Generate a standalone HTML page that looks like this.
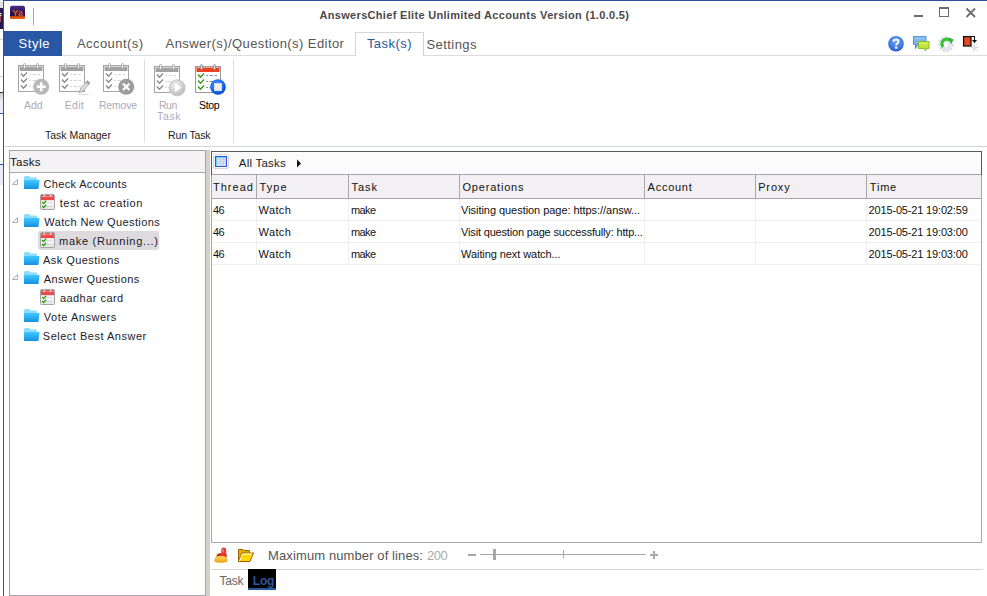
<!DOCTYPE html>
<html><head><meta charset="utf-8">
<style>
*{margin:0;padding:0;box-sizing:border-box}
html,body{width:987px;height:596px;overflow:hidden;background:#fff;font-family:"Liberation Sans",sans-serif;color:#222}
.a{position:absolute;white-space:nowrap}
.ln{position:absolute}
.bl{display:inline-block;width:0;height:0}
</style></head><body>
<svg width="0" height="0" style="position:absolute"><defs>
<linearGradient id="fgrad" x1="0" y1="0" x2="0" y2="1"><stop offset="0" stop-color="#40c8ff"/><stop offset="1" stop-color="#1590e0"/></linearGradient>
</defs></svg>
<div class="ln" style="left:0;top:0;width:3px;height:2px;background:#f0f0f0"></div>
<div class="ln" style="left:0;top:2px;width:3px;height:6px;background:#e0e0e0"></div>
<div class="ln" style="left:0;top:8px;width:3px;height:21px;background:#2a1650"></div>
<div class="a" style="left:-2px;top:12px;font-size:12px;color:#fff;line-height:12px">f</div>
<div class="ln" style="left:0;top:39px;width:3px;height:1px;background:#d0d0d0"></div>
<div class="ln" style="left:0;top:76px;width:3px;height:1px;background:#d0d0d0"></div>
<div class="ln" style="left:0;top:92px;width:3px;height:1px;background:#3a2a6a"></div>
<div class="ln" style="left:0;top:93px;width:3px;height:20px;background:linear-gradient(#c8c8c8,#ececf8 40%)"></div>
<div class="ln" style="left:0;top:113px;width:3px;height:1px;background:#3050c0"></div>
<div class="ln" style="left:0;top:164px;width:3px;height:1px;background:#3050c0"></div>
<div class="ln" style="left:0;top:165px;width:3px;height:20px;background:#ececf8"></div>
<div class="ln" style="left:3px;top:0;width:984px;height:1px;background:#2b4f9a"></div>
<div class="ln" style="left:3px;top:0;width:1px;height:596px;background:#2b57a8"></div>

<svg class="ln" style="left:10px;top:5px" width="15" height="15" viewBox="0 0 15 15">
<defs><linearGradient id="yag" x1="0" y1="0" x2="0" y2="1"><stop offset="0" stop-color="#4a2c80"/><stop offset=".8" stop-color="#1a0a50"/></linearGradient></defs>
<rect x="0" y="0.7" width="15" height="13.3" rx="2" fill="url(#yag)"/>
<path d="M0 11.3H15V12.2Q15 14 13 14H2Q0 14 0 12.2Z" fill="#f05a08"/>
<text x="2.2" y="11" font-family="Liberation Sans" font-size="9" font-weight="bold" fill="#e85a10">Ya</text>
</svg>
<div class="ln" style="left:33px;top:8px;width:1px;height:17px;background:#a8a8a8"></div>
<div class="ln" style="left:914px;top:15px;width:9px;height:2px;background:#6d6d6d"></div>
<div class="ln" style="left:939px;top:7px;width:10px;height:10px;border:1px solid #6d6d6d;border-top-width:2px"></div>
<svg class="ln" style="left:965px;top:7px" width="12" height="11"><path d="M1.5 1.5 L10 10 M10 1.5 L1.5 10" stroke="#6d6d6d" stroke-width="1.8"/></svg>

<div class="a" id="title" style="left:319.50px;top:9.60px;font-size:11px;line-height:11px;color:#4a4a4a;letter-spacing:0.315px;font-weight:bold;">AnswersChief Elite Unlimited Accounts Version (1.0.0.5)<span class="bl"></span></div>
<div class="ln" style="left:4px;top:55px;width:983px;height:1px;background:#dcdcdc"></div>
<div class="ln" style="left:4px;top:31px;width:58px;height:25px;background:#2a56a6"></div>
<div class="ln" style="left:355px;top:32px;width:69px;height:24px;border:1px solid #d5d5d5;border-bottom:none;background:#fff"></div>

<div class="a" id="t_style" style="left:18.50px;top:37.00px;font-size:13px;line-height:13px;color:#fff;letter-spacing:0.550px;">Style<span class="bl"></span></div>
<div class="a" id="t_acc" style="left:76.90px;top:37.00px;font-size:13px;line-height:13px;color:#555;letter-spacing:0.445px;">Account(s)<span class="bl"></span></div>
<div class="a" id="t_ans" style="left:165.60px;top:37.00px;font-size:13px;line-height:13px;color:#555;letter-spacing:0.423px;">Answer(s)/Question(s) Editor<span class="bl"></span></div>
<div class="a" id="t_task" style="left:366.90px;top:36.71px;font-size:13px;line-height:13px;color:#2b579a;letter-spacing:0.466px;">Task(s)<span class="bl"></span></div>
<div class="a" id="t_set" style="left:426.50px;top:38.00px;font-size:13px;line-height:13px;color:#555;letter-spacing:0.428px;">Settings<span class="bl"></span></div>
<div class="ln" style="left:4px;top:146px;width:983px;height:1px;background:#d5d5d5"></div>
<div class="ln" style="left:144px;top:59px;width:1px;height:84px;background:#e0e0e0"></div>
<div class="ln" style="left:233px;top:59px;width:1px;height:84px;background:#e0e0e0"></div>

<svg class="ln" style="left:17px;top:63px" width="34" height="34"><rect x="1.5" y="2.5" width="25" height="26" fill="#fff" stroke="#a4a4a4"/><rect x="2" y="3" width="24" height="5" fill="#a2a2a2"/><path d="M2.5 8V3.5H25.5V8" fill="none" stroke="#dadada" stroke-width="1"/><rect x="6.5" y="0.5" width="2" height="5" rx="1" fill="#eeeeee" stroke="#a0a0a0" stroke-width=".8"/><rect x="19.5" y="0.5" width="2" height="5" rx="1" fill="#eeeeee" stroke="#a0a0a0" stroke-width=".8"/><path d="M4 10.6L6.5 13.2L10 9.6" fill="none" stroke="#8c8c8c" stroke-width="1.5"/><path d="M12.2 11.5H23" stroke="#d4d4d4" stroke-dasharray="1.8 1.5 3.5 1.5 3.5"/><path d="M4 16.6L6.5 19.2L10 15.6" fill="none" stroke="#8c8c8c" stroke-width="1.5"/><path d="M12.2 17.5H23" stroke="#d4d4d4" stroke-dasharray="1.8 1.5 3.5 1.5 3.5"/><path d="M4 22.6L6.5 25.2L10 21.6" fill="none" stroke="#8c8c8c" stroke-width="1.5"/><path d="M12.2 23.5H23" stroke="#d4d4d4" stroke-dasharray="1.8 1.5 3.5 1.5 3.5"/><circle cx="24.2" cy="23.8" r="8" fill="#b8b8b8"/><path d="M24.2 19.3V28.3M19.7 23.8H28.7" stroke="#fff" stroke-width="2.6"/></svg>
<svg class="ln" style="left:58px;top:63px" width="34" height="34"><rect x="1.5" y="2.5" width="25" height="26" fill="#fff" stroke="#a4a4a4"/><rect x="2" y="3" width="24" height="5" fill="#a2a2a2"/><path d="M2.5 8V3.5H25.5V8" fill="none" stroke="#dadada" stroke-width="1"/><rect x="6.5" y="0.5" width="2" height="5" rx="1" fill="#eeeeee" stroke="#a0a0a0" stroke-width=".8"/><rect x="19.5" y="0.5" width="2" height="5" rx="1" fill="#eeeeee" stroke="#a0a0a0" stroke-width=".8"/><path d="M4 10.6L6.5 13.2L10 9.6" fill="none" stroke="#8c8c8c" stroke-width="1.5"/><path d="M12.2 11.5H23" stroke="#d4d4d4" stroke-dasharray="1.8 1.5 3.5 1.5 3.5"/><path d="M4 16.6L6.5 19.2L10 15.6" fill="none" stroke="#8c8c8c" stroke-width="1.5"/><path d="M12.2 17.5H23" stroke="#d4d4d4" stroke-dasharray="1.8 1.5 3.5 1.5 3.5"/><path d="M4 22.6L6.5 25.2L10 21.6" fill="none" stroke="#8c8c8c" stroke-width="1.5"/><path d="M12.2 23.5H23" stroke="#d4d4d4" stroke-dasharray="1.8 1.5 3.5 1.5 3.5"/><path d="M21 30L23 25L29.5 17.5L32 20L25.5 27.5Z" fill="#dcdcdc" stroke="#b0b0b0"/><path d="M28.5 18.5L31 21" stroke="#a0a0a0" stroke-width="2"/><path d="M20 31.5H31" stroke="#e0e0e0"/></svg>
<svg class="ln" style="left:102px;top:63px" width="34" height="34"><rect x="1.5" y="2.5" width="25" height="26" fill="#fff" stroke="#a4a4a4"/><rect x="2" y="3" width="24" height="5" fill="#a2a2a2"/><path d="M2.5 8V3.5H25.5V8" fill="none" stroke="#dadada" stroke-width="1"/><rect x="6.5" y="0.5" width="2" height="5" rx="1" fill="#eeeeee" stroke="#a0a0a0" stroke-width=".8"/><rect x="19.5" y="0.5" width="2" height="5" rx="1" fill="#eeeeee" stroke="#a0a0a0" stroke-width=".8"/><path d="M4 10.6L6.5 13.2L10 9.6" fill="none" stroke="#8c8c8c" stroke-width="1.5"/><path d="M12.2 11.5H23" stroke="#d4d4d4" stroke-dasharray="1.8 1.5 3.5 1.5 3.5"/><path d="M4 16.6L6.5 19.2L10 15.6" fill="none" stroke="#8c8c8c" stroke-width="1.5"/><path d="M12.2 17.5H23" stroke="#d4d4d4" stroke-dasharray="1.8 1.5 3.5 1.5 3.5"/><path d="M4 22.6L6.5 25.2L10 21.6" fill="none" stroke="#8c8c8c" stroke-width="1.5"/><path d="M12.2 23.5H23" stroke="#d4d4d4" stroke-dasharray="1.8 1.5 3.5 1.5 3.5"/><circle cx="24.2" cy="23.8" r="8" fill="#9c9c9c"/><path d="M21 20.6L27.4 27M27.4 20.6L21 27" stroke="#fff" stroke-width="2.2"/></svg>
<svg class="ln" style="left:153px;top:64px" width="34" height="34"><defs><radialGradient id="rg" cx=".4" cy=".35" r=".7"><stop offset="0" stop-color="#f4f4f4"/><stop offset="1" stop-color="#b8b8b8"/></radialGradient></defs><rect x="1.5" y="2.5" width="25" height="26" fill="#fff" stroke="#a4a4a4"/><rect x="2" y="3" width="24" height="5" fill="#a2a2a2"/><path d="M2.5 8V3.5H25.5V8" fill="none" stroke="#dadada" stroke-width="1"/><rect x="6.5" y="0.5" width="2" height="5" rx="1" fill="#eeeeee" stroke="#a0a0a0" stroke-width=".8"/><rect x="19.5" y="0.5" width="2" height="5" rx="1" fill="#eeeeee" stroke="#a0a0a0" stroke-width=".8"/><path d="M4 10.6L6.5 13.2L10 9.6" fill="none" stroke="#8c8c8c" stroke-width="1.5"/><path d="M12.2 11.5H23" stroke="#d4d4d4" stroke-dasharray="1.8 1.5 3.5 1.5 3.5"/><path d="M4 16.6L6.5 19.2L10 15.6" fill="none" stroke="#8c8c8c" stroke-width="1.5"/><path d="M12.2 17.5H23" stroke="#d4d4d4" stroke-dasharray="1.8 1.5 3.5 1.5 3.5"/><path d="M4 22.6L6.5 25.2L10 21.6" fill="none" stroke="#8c8c8c" stroke-width="1.5"/><path d="M12.2 23.5H23" stroke="#d4d4d4" stroke-dasharray="1.8 1.5 3.5 1.5 3.5"/><circle cx="24.2" cy="23.8" r="8" fill="url(#rg)" stroke="#c8c8c8"/><path d="M22 19.5L28.5 23.8L22 28Z" fill="#fff"/></svg>
<svg class="ln" style="left:194px;top:64px" width="34" height="34"><defs><radialGradient id="bg2" cx=".45" cy=".4" r=".65"><stop offset="0" stop-color="#5ab0ff"/><stop offset=".7" stop-color="#1060e8"/><stop offset="1" stop-color="#0a3cb0"/></radialGradient></defs><rect x="1.5" y="2.5" width="25" height="26" fill="#fff" stroke="#9a9a9a"/><rect x="2" y="3" width="24" height="5" fill="#e8431e"/><path d="M2.5 8V3.5H25.5V8" fill="none" stroke="#f8a088" stroke-width="1"/><rect x="6.5" y="0.5" width="2" height="5" rx="1" fill="#d8e0e8" stroke="#8090a0" stroke-width=".8"/><rect x="19.5" y="0.5" width="2" height="5" rx="1" fill="#d8e0e8" stroke="#8090a0" stroke-width=".8"/><path d="M4 10.6L6.5 13.2L10 9.6" fill="none" stroke="#3a9a1e" stroke-width="1.5"/><path d="M12.2 11.5H23" stroke="#8890a0" stroke-dasharray="1.8 1.5 3.5 1.5 3.5"/><path d="M4 16.6L6.5 19.2L10 15.6" fill="none" stroke="#3a9a1e" stroke-width="1.5"/><path d="M12.2 17.5H23" stroke="#8890a0" stroke-dasharray="1.8 1.5 3.5 1.5 3.5"/><path d="M4 22.6L6.5 25.2L10 21.6" fill="none" stroke="#3a9a1e" stroke-width="1.5"/><path d="M12.2 23.5H23" stroke="#8890a0" stroke-dasharray="1.8 1.5 3.5 1.5 3.5"/><circle cx="24" cy="23" r="7.8" fill="url(#bg2)"/><rect x="20.5" y="19.5" width="7" height="7" fill="#f0f0f0" stroke="#d0d8e8"/></svg>
<div class="a" id="r_add" style="left:24.00px;top:100.00px;font-size:10.5px;line-height:10.5px;color:#b0a8b8;letter-spacing:0.000px;">Add<span class="bl"></span></div>
<div class="a" id="r_edit" style="left:64.80px;top:100.00px;font-size:10.5px;line-height:10.5px;color:#b0a8b8;letter-spacing:0.267px;">Edit<span class="bl"></span></div>
<div class="a" id="r_rem" style="left:98.90px;top:100.00px;font-size:10.5px;line-height:10.5px;color:#b0a8b8;letter-spacing:-0.160px;">Remove<span class="bl"></span></div>
<div class="a" id="r_run" style="left:159.00px;top:100.00px;font-size:10.5px;line-height:10.5px;color:#b0a8b8;letter-spacing:-0.500px;">Run<span class="bl"></span></div>
<div class="a" id="r_task" style="left:157.00px;top:111.00px;font-size:10.5px;line-height:10.5px;color:#b0a8b8;letter-spacing:0.667px;">Task<span class="bl"></span></div>
<div class="a" id="r_stop" style="left:199.00px;top:100.00px;font-size:10.5px;line-height:10.5px;color:#000;letter-spacing:-0.334px;">Stop<span class="bl"></span></div>
<div class="a" id="r_tm" style="left:45.00px;top:129.71px;font-size:10.5px;line-height:10.5px;color:#222;letter-spacing:0.000px;">Task Manager<span class="bl"></span></div>
<div class="a" id="r_rt" style="left:168.00px;top:129.71px;font-size:10.5px;line-height:10.5px;color:#222;letter-spacing:-0.143px;">Run Task<span class="bl"></span></div>
<svg class="ln" style="left:887px;top:35px" width="18" height="18" viewBox="0 0 18 18">
<defs><radialGradient id="hg" cx=".5" cy=".35" r=".65"><stop offset="0" stop-color="#6aa8f0"/><stop offset=".8" stop-color="#3a70d8"/><stop offset="1" stop-color="#2050b8"/></radialGradient></defs>
<circle cx="9" cy="8.8" r="7.8" fill="url(#hg)"/>
<path d="M6.5 6.8Q6.5 4.5 9 4.5Q11.5 4.5 11.5 6.6Q11.5 8 10 8.6Q9.2 9 9.2 10.3" fill="none" stroke="#fff" stroke-width="1.9"/>
<rect x="8.1" y="11.5" width="2.2" height="2.2" fill="#fff"/></svg>
<svg class="ln" style="left:913px;top:36px" width="17" height="17" viewBox="0 0 17 17">
<defs><linearGradient id="chb" x1="0" y1="0" x2="0" y2="1"><stop offset="0" stop-color="#90c8f8"/><stop offset="1" stop-color="#5aa0e8"/></linearGradient>
<linearGradient id="chg" x1="0" y1="0" x2="0" y2="1"><stop offset="0" stop-color="#d8f060"/><stop offset="1" stop-color="#a8d818"/></linearGradient></defs>
<path d="M0.5 0.5H13V8.5H5L2.5 12.5V8.5H0.5Z" fill="url(#chb)" stroke="#4a88d0" stroke-width=".9"/>
<path d="M5.5 5.5H16V12.5H13.5L12.5 15L11 12.5H5.5Z" fill="url(#chg)" stroke="#80b820" stroke-width=".9"/></svg>
<svg class="ln" style="left:937px;top:35px" width="18" height="18" viewBox="0 0 18 18">
<circle cx="9" cy="9" r="6.6" fill="none" stroke="#dcdce6" stroke-width="3" stroke-dasharray="2.6 1.1"/>
<circle cx="9" cy="9" r="5.6" fill="#e4e4ee"/>
<path d="M6.2 12A4.6 4.6 0 0 1 13 5.5" fill="none" stroke="#36c436" stroke-width="3.2"/>
<path d="M11 2.8L16.5 4.2L14.2 9.2Z" fill="#30b030"/>
<circle cx="9.2" cy="9.6" r="2.2" fill="#fff"/></svg>
<svg class="ln" style="left:962px;top:35px" width="18" height="18" viewBox="0 0 18 18">
<rect x="1.6" y="1.6" width="7.4" height="9.4" fill="#e8481e" stroke="#111" stroke-width="1.3"/>
<path d="M9 1.5H12.5V5.5" fill="none" stroke="#111" stroke-width="1.1"/>
<path d="M10 5H15L12.5 8.2Z" fill="#111"/>
<path d="M12.5 8.5V16.5M8.5 12.5H16.5M9.7 9.7L15.3 15.3M15.3 9.7L9.7 15.3" stroke="#c0c0c0" stroke-width=".7"/>
<circle cx="12.5" cy="12.5" r="1.2" fill="#e8e8e8"/></svg>

<div class="ln" style="left:9px;top:150px;width:197px;height:446px;border:1px solid #a8a6ac;background:#fff"></div>
<div class="ln" style="left:10px;top:151px;width:195px;height:22px;background:#f5f2f5;border-bottom:1px solid #a8a6ac"></div>

<div class="a" id="tasks_h" style="left:10.00px;top:156.71px;font-size:11.5px;line-height:11.5px;color:#111;letter-spacing:0.250px;">Tasks<span class="bl"></span></div>
<svg class="ln" style="left:12px;top:179px" width="7" height="7"><path d="M5.5 0.5V5.5H0.5Z" fill="none" stroke="#b0b0b0"/></svg>
<svg class="ln" style="left:24px;top:176px" width="16" height="14" viewBox="0 0 16 14">
<path d="M0 1.5Q0 0 1.5 0H5L6.5 1.5H12Q13 1.5 13 2.5V4H0Z" fill="#8cdcff"/>
<path d="M0 4H15.5L14.5 12.5Q14.3 13 13.8 13H0.5Q0 13 0 12.5Z" fill="url(#fgrad)"/>
</svg>
<div class="a" id="tree0" style="left:43.60px;top:179.00px;font-size:11px;line-height:11px;color:#1a1a2a;letter-spacing:0.321px;">Check Accounts<span class="bl"></span></div>
<svg class="ln" style="left:40px;top:194px" width="16" height="17" viewBox="0 0 16 17">
<defs><linearGradient id="scg40194" x1="0" y1="0" x2="0" y2="1"><stop offset=".4" stop-color="#fff"/><stop offset="1" stop-color="#e4e4e4"/></linearGradient></defs>
<rect x="0.5" y="0.5" width="14" height="15" rx="1" fill="url(#scg40194)" stroke="#a4a4a4"/>
<rect x="1" y="1" width="13" height="5.2" fill="#f04848"/>
<path d="M1.5 2.5H13.5" stroke="#ff9090" stroke-width=".8"/>
<rect x="3.5" y="0" width="1.6" height="3" rx=".8" fill="#f4f4f4" stroke="#a0a0a0" stroke-width=".6"/>
<rect x="9.8" y="0" width="1.6" height="3" rx=".8" fill="#f4f4f4" stroke="#a0a0a0" stroke-width=".6"/>
<path d="M2 8L3.6 9.5L6.2 6.8M2 12L3.6 13.5L6.2 10.8" fill="none" stroke="#2a9a10" stroke-width="1.3"/>
<path d="M7 8.5H13M7 12.5H13" stroke="#c8c8d4" stroke-width=".9" stroke-dasharray="2 .8"/>
</svg>
<div class="a" id="tree1" style="left:59.70px;top:198.00px;font-size:11px;line-height:11px;color:#1a1a2a;letter-spacing:0.533px;">test ac creation<span class="bl"></span></div>
<svg class="ln" style="left:12px;top:217px" width="7" height="7"><path d="M5.5 0.5V5.5H0.5Z" fill="none" stroke="#b0b0b0"/></svg>
<svg class="ln" style="left:24px;top:214px" width="16" height="14" viewBox="0 0 16 14">
<path d="M0 1.5Q0 0 1.5 0H5L6.5 1.5H12Q13 1.5 13 2.5V4H0Z" fill="#8cdcff"/>
<path d="M0 4H15.5L14.5 12.5Q14.3 13 13.8 13H0.5Q0 13 0 12.5Z" fill="url(#fgrad)"/>
</svg>
<div class="a" id="tree2" style="left:44.30px;top:217.00px;font-size:11px;line-height:11px;color:#1a1a2a;letter-spacing:0.388px;">Watch New Questions<span class="bl"></span></div>
<div class="ln" style="left:38px;top:230.5px;width:121px;height:19px;background:#dddbdd;border-radius:2px"></div>
<svg class="ln" style="left:40px;top:232px" width="16" height="17" viewBox="0 0 16 17">
<defs><linearGradient id="scg40232" x1="0" y1="0" x2="0" y2="1"><stop offset=".4" stop-color="#fff"/><stop offset="1" stop-color="#e4e4e4"/></linearGradient></defs>
<rect x="0.5" y="0.5" width="14" height="15" rx="1" fill="url(#scg40232)" stroke="#a4a4a4"/>
<rect x="1" y="1" width="13" height="5.2" fill="#f04848"/>
<path d="M1.5 2.5H13.5" stroke="#ff9090" stroke-width=".8"/>
<rect x="3.5" y="0" width="1.6" height="3" rx=".8" fill="#f4f4f4" stroke="#a0a0a0" stroke-width=".6"/>
<rect x="9.8" y="0" width="1.6" height="3" rx=".8" fill="#f4f4f4" stroke="#a0a0a0" stroke-width=".6"/>
<path d="M2 8L3.6 9.5L6.2 6.8M2 12L3.6 13.5L6.2 10.8" fill="none" stroke="#2a9a10" stroke-width="1.3"/>
<path d="M7 8.5H13M7 12.5H13" stroke="#c8c8d4" stroke-width=".9" stroke-dasharray="2 .8"/>
</svg>
<div class="a" id="tree3" style="left:59.10px;top:236.00px;font-size:11px;line-height:11px;color:#1a1a2a;letter-spacing:0.713px;">make (Running...)<span class="bl"></span></div>
<svg class="ln" style="left:24px;top:252px" width="16" height="14" viewBox="0 0 16 14">
<path d="M0 1.5Q0 0 1.5 0H5L6.5 1.5H12Q13 1.5 13 2.5V4H0Z" fill="#8cdcff"/>
<path d="M0 4H15.5L14.5 12.5Q14.3 13 13.8 13H0.5Q0 13 0 12.5Z" fill="url(#fgrad)"/>
</svg>
<div class="a" id="tree4" style="left:43.10px;top:255.00px;font-size:11px;line-height:11px;color:#1a1a2a;letter-spacing:0.433px;">Ask Questions<span class="bl"></span></div>
<svg class="ln" style="left:12px;top:274px" width="7" height="7"><path d="M5.5 0.5V5.5H0.5Z" fill="none" stroke="#b0b0b0"/></svg>
<svg class="ln" style="left:24px;top:271px" width="16" height="14" viewBox="0 0 16 14">
<path d="M0 1.5Q0 0 1.5 0H5L6.5 1.5H12Q13 1.5 13 2.5V4H0Z" fill="#8cdcff"/>
<path d="M0 4H15.5L14.5 12.5Q14.3 13 13.8 13H0.5Q0 13 0 12.5Z" fill="url(#fgrad)"/>
</svg>
<div class="a" id="tree5" style="left:43.80px;top:274.00px;font-size:11px;line-height:11px;color:#1a1a2a;letter-spacing:0.414px;">Answer Questions<span class="bl"></span></div>
<svg class="ln" style="left:40px;top:289px" width="16" height="17" viewBox="0 0 16 17">
<defs><linearGradient id="scg40289" x1="0" y1="0" x2="0" y2="1"><stop offset=".4" stop-color="#fff"/><stop offset="1" stop-color="#e4e4e4"/></linearGradient></defs>
<rect x="0.5" y="0.5" width="14" height="15" rx="1" fill="url(#scg40289)" stroke="#a4a4a4"/>
<rect x="1" y="1" width="13" height="5.2" fill="#f04848"/>
<path d="M1.5 2.5H13.5" stroke="#ff9090" stroke-width=".8"/>
<rect x="3.5" y="0" width="1.6" height="3" rx=".8" fill="#f4f4f4" stroke="#a0a0a0" stroke-width=".6"/>
<rect x="9.8" y="0" width="1.6" height="3" rx=".8" fill="#f4f4f4" stroke="#a0a0a0" stroke-width=".6"/>
<path d="M2 8L3.6 9.5L6.2 6.8M2 12L3.6 13.5L6.2 10.8" fill="none" stroke="#2a9a10" stroke-width="1.3"/>
<path d="M7 8.5H13M7 12.5H13" stroke="#c8c8d4" stroke-width=".9" stroke-dasharray="2 .8"/>
</svg>
<div class="a" id="tree6" style="left:59.90px;top:293.00px;font-size:11px;line-height:11px;color:#1a1a2a;letter-spacing:0.460px;">aadhar card<span class="bl"></span></div>
<svg class="ln" style="left:24px;top:309px" width="16" height="14" viewBox="0 0 16 14">
<path d="M0 1.5Q0 0 1.5 0H5L6.5 1.5H12Q13 1.5 13 2.5V4H0Z" fill="#8cdcff"/>
<path d="M0 4H15.5L14.5 12.5Q14.3 13 13.8 13H0.5Q0 13 0 12.5Z" fill="url(#fgrad)"/>
</svg>
<div class="a" id="tree7" style="left:43.80px;top:312.00px;font-size:11px;line-height:11px;color:#1a1a2a;letter-spacing:0.528px;">Vote Answers<span class="bl"></span></div>
<svg class="ln" style="left:24px;top:328px" width="16" height="14" viewBox="0 0 16 14">
<path d="M0 1.5Q0 0 1.5 0H5L6.5 1.5H12Q13 1.5 13 2.5V4H0Z" fill="#8cdcff"/>
<path d="M0 4H15.5L14.5 12.5Q14.3 13 13.8 13H0.5Q0 13 0 12.5Z" fill="url(#fgrad)"/>
</svg>
<div class="a" id="tree8" style="left:42.80px;top:331.00px;font-size:11px;line-height:11px;color:#1a1a2a;letter-spacing:0.506px;">Select Best Answer<span class="bl"></span></div>
<div class="ln" style="left:206px;top:150px;width:4px;height:446px;background:#d4d0ca"></div>
<div class="ln" style="left:211px;top:151px;width:771px;height:392px;border:1px solid #a8a6ac;background:#fff"></div>
<div class="ln" style="left:211px;top:151px;width:771px;height:24px;border:1px solid #535a62;border-bottom:none"></div>
<div class="ln" style="left:212px;top:152px;width:769px;height:23px;background:#fcfbfc;border-bottom:1px solid #a8a6ac"></div>
<div class="ln" style="left:212px;top:175px;width:769px;height:24px;background:#f3f0f3;border-bottom:1px solid #a8a6ac"></div>
<svg class="ln" style="left:213px;top:154px" width="17" height="16" viewBox="0 0 17 16">
<rect x="0.5" y="0.5" width="15" height="14" rx="1.5" fill="#fcfcfc" stroke="#d8d8d8"/>
<rect x="2" y="2" width="12" height="11" fill="#60d4ff"/>
<rect x="4" y="4" width="9" height="8" fill="#e8dcf8"/>
<path d="M4 5.5H13M4 7.5H13M4 9.5H13" stroke="#d0c0f0" stroke-width=".7"/>
<path d="M7.5 4V12M10.5 4V12" stroke="#a0dcc0" stroke-width=".7"/>
<rect x="2.5" y="2.5" width="11" height="10" fill="none" stroke="#2454e8" stroke-width="1"/></svg>
<svg class="ln" style="left:296px;top:159px" width="6" height="9"><path d="M1 0.5L5 4.5L1 8.5Z" fill="#111"/></svg>

<div class="a" id="alltasks" style="left:238.80px;top:157.71px;font-size:11.5px;line-height:11.5px;color:#1a1a2a;letter-spacing:0.225px;">All Tasks<span class="bl"></span></div>
<div class="a" id="h_Thread" style="left:212.90px;top:181.90px;font-size:11px;line-height:11px;color:#111;letter-spacing:1.040px;">Thread<span class="bl"></span></div>
<div class="ln" style="left:256px;top:175px;width:1px;height:24px;background:#a8a8a8"></div>
<div class="ln" style="left:256px;top:199px;width:1px;height:66px;background:#efefef"></div>
<div class="a" id="h_Type" style="left:259.40px;top:181.90px;font-size:11px;line-height:11px;color:#111;letter-spacing:1.135px;">Type<span class="bl"></span></div>
<div class="ln" style="left:348px;top:175px;width:1px;height:24px;background:#a8a8a8"></div>
<div class="ln" style="left:348px;top:199px;width:1px;height:66px;background:#efefef"></div>
<div class="a" id="h_Task" style="left:351.50px;top:181.90px;font-size:11px;line-height:11px;color:#111;letter-spacing:1.000px;">Task<span class="bl"></span></div>
<div class="ln" style="left:459px;top:175px;width:1px;height:24px;background:#a8a8a8"></div>
<div class="ln" style="left:459px;top:199px;width:1px;height:66px;background:#efefef"></div>
<div class="a" id="h_Operations" style="left:462.50px;top:181.90px;font-size:11px;line-height:11px;color:#111;letter-spacing:0.802px;">Operations<span class="bl"></span></div>
<div class="ln" style="left:644px;top:175px;width:1px;height:24px;background:#a8a8a8"></div>
<div class="ln" style="left:644px;top:199px;width:1px;height:66px;background:#efefef"></div>
<div class="a" id="h_Account" style="left:647.60px;top:181.90px;font-size:11px;line-height:11px;color:#111;letter-spacing:0.734px;">Account<span class="bl"></span></div>
<div class="ln" style="left:755px;top:175px;width:1px;height:24px;background:#a8a8a8"></div>
<div class="ln" style="left:755px;top:199px;width:1px;height:66px;background:#efefef"></div>
<div class="a" id="h_Proxy" style="left:758.20px;top:181.90px;font-size:11px;line-height:11px;color:#111;letter-spacing:0.850px;">Proxy<span class="bl"></span></div>
<div class="ln" style="left:866px;top:175px;width:1px;height:24px;background:#a8a8a8"></div>
<div class="ln" style="left:866px;top:199px;width:1px;height:66px;background:#efefef"></div>
<div class="a" id="h_Time" style="left:869.80px;top:181.90px;font-size:11px;line-height:11px;color:#111;letter-spacing:0.800px;">Time<span class="bl"></span></div>
<div class="ln" style="left:212px;top:220px;width:769px;height:1px;background:#efefef"></div>
<div class="a" id="d0_0" style="left:212.90px;top:204.81px;font-size:11px;line-height:11px;color:#111;letter-spacing:-0.600px;">46<span class="bl"></span></div>
<div class="a" id="d0_1" style="left:258.60px;top:204.81px;font-size:11px;line-height:11px;color:#111;letter-spacing:0.350px;">Watch<span class="bl"></span></div>
<div class="a" id="d0_2" style="left:351.00px;top:204.81px;font-size:11px;line-height:11px;color:#111;letter-spacing:-0.599px;">make<span class="bl"></span></div>
<div class="a" id="d0_3" style="left:461.10px;top:204.81px;font-size:11px;line-height:11px;color:#111;letter-spacing:-0.049px;">Visiting question page: https://answ...<span class="bl"></span></div>
<div class="a" id="d0_6" style="left:868.60px;top:204.81px;font-size:11px;line-height:11px;color:#111;letter-spacing:-0.165px;">2015-05-21 19:02:59<span class="bl"></span></div>
<div class="ln" style="left:212px;top:242px;width:769px;height:1px;background:#efefef"></div>
<div class="a" id="d1_0" style="left:212.90px;top:226.81px;font-size:11px;line-height:11px;color:#111;letter-spacing:-0.600px;">46<span class="bl"></span></div>
<div class="a" id="d1_1" style="left:258.60px;top:226.81px;font-size:11px;line-height:11px;color:#111;letter-spacing:0.350px;">Watch<span class="bl"></span></div>
<div class="a" id="d1_2" style="left:351.00px;top:226.81px;font-size:11px;line-height:11px;color:#111;letter-spacing:-0.599px;">make<span class="bl"></span></div>
<div class="a" id="d1_3" style="left:461.10px;top:226.81px;font-size:11px;line-height:11px;color:#111;letter-spacing:-0.173px;">Visit question page successfully: http...<span class="bl"></span></div>
<div class="a" id="d1_6" style="left:868.60px;top:226.81px;font-size:11px;line-height:11px;color:#111;letter-spacing:-0.166px;">2015-05-21 19:03:00<span class="bl"></span></div>
<div class="ln" style="left:212px;top:264px;width:769px;height:1px;background:#efefef"></div>
<div class="a" id="d2_0" style="left:212.90px;top:248.81px;font-size:11px;line-height:11px;color:#111;letter-spacing:-0.600px;">46<span class="bl"></span></div>
<div class="a" id="d2_1" style="left:258.60px;top:248.81px;font-size:11px;line-height:11px;color:#111;letter-spacing:0.350px;">Watch<span class="bl"></span></div>
<div class="a" id="d2_2" style="left:351.00px;top:248.81px;font-size:11px;line-height:11px;color:#111;letter-spacing:-0.599px;">make<span class="bl"></span></div>
<div class="a" id="d2_3" style="left:461.10px;top:248.81px;font-size:11px;line-height:11px;color:#111;letter-spacing:-0.080px;">Waiting next watch...<span class="bl"></span></div>
<div class="a" id="d2_6" style="left:868.60px;top:248.81px;font-size:11px;line-height:11px;color:#111;letter-spacing:-0.166px;">2015-05-21 19:03:00<span class="bl"></span></div>
<svg class="ln" style="left:214px;top:547px" width="15" height="17" viewBox="0 0 15 17">
<defs><linearGradient id="brm" x1="0" y1="0" x2="0" y2="1"><stop offset="0" stop-color="#ffe070"/><stop offset="1" stop-color="#f0a818"/></linearGradient></defs>
<path d="M3.2 7.5L12.5 9.5L13 14.5Q9 16 1.5 15Q0.2 14.2 1 12.5Z" fill="url(#brm)" stroke="#e8a020" stroke-width=".7"/>
<path d="M3 7.2Q7 5 12.8 6.8L12.6 10Q8 8 3 9.5Z" fill="#d82a20"/>
<rect x="7.2" y="0.6" width="5" height="7.5" rx="2.4" fill="#e83838"/>
<path d="M9 2.2V5.5" stroke="#ffa0a0" stroke-width="1.1"/></svg>
<svg class="ln" style="left:237px;top:548px" width="18" height="15" viewBox="0 0 18 15">
<path d="M1.5 13.5V1.5H6L7 2.5H12.5V4.5" fill="#e0b000" stroke="#a06000"/>
<path d="M1.5 13.5H13L16.5 5H5Z" fill="#ffd800" stroke="#a06000"/>
<path d="M2.5 13L5.5 6H15" fill="none" stroke="#fff"/></svg>
<div class="ln" style="left:211px;top:569px;width:772px;height:1px;background:#d5d5d5"></div>
<div class="ln" style="left:468px;top:554px;width:8px;height:2px;background:#a8a8a8"></div>
<div class="ln" style="left:480px;top:554px;width:166px;height:1px;background:#a8a8a8"></div>
<div class="ln" style="left:493px;top:549px;width:3px;height:11px;background:#a8a8a8"></div>
<div class="ln" style="left:563px;top:550px;width:1px;height:8px;background:#a8a8a8"></div>
<div class="ln" style="left:650px;top:554px;width:8px;height:2px;background:#a8a8a8"></div>
<div class="ln" style="left:653px;top:551px;width:2px;height:8px;background:#a8a8a8"></div>
<div class="ln" style="left:248px;top:569px;width:28px;height:21px;background:#000;border-bottom:2px solid #2b579a"></div>

<div class="a" id="maxl" style="left:268.10px;top:549.00px;font-size:13px;line-height:13px;color:#555;letter-spacing:0.105px;">Maximum number of lines:<span class="bl"></span></div>
<div class="a" id="maxv" style="left:427.10px;top:549.00px;font-size:13px;line-height:13px;color:#aaa;letter-spacing:-0.500px;">200<span class="bl"></span></div>
<div class="a" id="b_task" style="left:219.50px;top:574.61px;font-size:12px;line-height:12px;color:#666;letter-spacing:-0.198px;">Task<span class="bl"></span></div>
<div class="a" id="b_log" style="left:252.80px;top:574.84px;font-size:12px;line-height:12px;color:#2b579a;letter-spacing:-0.200px;font-weight:bold;">Log<span class="bl"></span></div>
</body></html>
